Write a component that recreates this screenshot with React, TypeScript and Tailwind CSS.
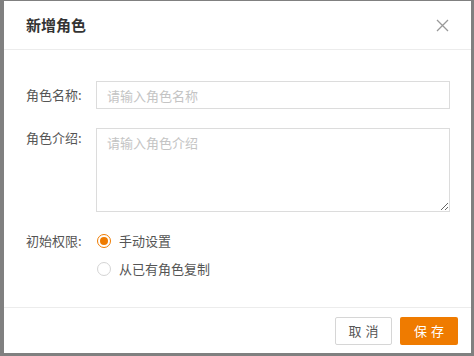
import { useState } from 'react'

const font = '"Noto Sans CJK SC", "Noto Sans", sans-serif'

const Radio = ({ checked, label, onClick }: { checked: boolean; label: string; onClick: () => void }) => (
  <div className="flex items-center h-5 cursor-pointer" onClick={onClick}>
    <span
      className={
        checked
          ? 'w-[14px] h-[14px] rounded-full border border-[#ef7b00] flex items-center justify-center bg-white'
          : 'w-[14px] h-[14px] rounded-full border border-[#d4d4d4] bg-white'
      }
    >
      {checked && <span className="w-[8px] h-[8px] rounded-full bg-[#ef7b00]" />}
    </span>
    <span className="ml-[8px] text-[13px] text-[#555]">{label}</span>
  </div>
)

const App = () => {
  const [name, setName] = useState('')
  const [desc, setDesc] = useState('')
  const [mode, setMode] = useState('manual')

  return (
    <div className="w-[474px] h-[356px] bg-[#808080] pl-[4px] pt-px overflow-hidden" style={{ fontFamily: font }}>
      <div className="w-[467px] h-[352px] bg-white flex flex-col">
        <div className="h-[49px] border-b border-[#ececec] flex items-center justify-between pl-[22px] pr-[22px] shrink-0">
          <h2 className="text-[15px] font-semibold text-[#333]">新增角色</h2>
          <button className="text-[#999]">
            <svg width="13" height="13" viewBox="0 0 13 13" fill="none" stroke="currentColor" strokeWidth="1.3">
              <path d="M1 1L12 12M12 1L1 12" />
            </svg>
          </button>
        </div>

        <div className="flex-1 px-[22px] pr-[21px] pt-[31px]">
          <div className="flex items-center">
            <label className="w-[70px] text-[13px] text-[#555]">角色名称:</label>
            <input
              type="text"
              value={name}
              onChange={(e) => setName(e.target.value)}
              placeholder="请输入角色名称"
              className="flex-1 h-[28px] border border-[#dcdcdc] px-[10px] text-[13px] text-[#333] placeholder:text-[#c4c4c4] outline-none"
            />
          </div>
          <div className="flex items-start mt-[19px]">
            <label className="w-[70px] text-[13px] leading-[20px] text-[#555]">角色介绍:</label>
            <textarea
              value={desc}
              onChange={(e) => setDesc(e.target.value)}
              placeholder="请输入角色介绍"
              className="flex-1 h-[84px] border border-[#dcdcdc] px-[10px] py-[4px] text-[13px] text-[#333] placeholder:text-[#c4c4c4] outline-none"
            />
          </div>
          <div className="flex items-start mt-[19px]">
            <label className="w-[70px] text-[13px] leading-[20px] text-[#555]">初始权限:</label>
            <div className="flex flex-col gap-[8px] pl-px">
              <Radio checked={mode === 'manual'} label="手动设置" onClick={() => setMode('manual')} />
              <Radio checked={mode === 'copy'} label="从已有角色复制" onClick={() => setMode('copy')} />
            </div>
          </div>
        </div>

        <div className="h-[46px] border-t border-[#ececec] flex items-start justify-end gap-[8px] pt-[9px] pr-[13px] shrink-0">
          <button className="w-[57px] h-[28px] border border-[#d6d6d6] rounded-[2px] text-[13px] text-[#555] tracking-[4px] pl-[4px] bg-white">
            取消
          </button>
          <button className="w-[58px] h-[28px] rounded-[2px] bg-[#ef7b00] text-[13px] text-white tracking-[4px] pl-[4px]">
            保存
          </button>
        </div>
      </div>
    </div>
  )
}

export default App
